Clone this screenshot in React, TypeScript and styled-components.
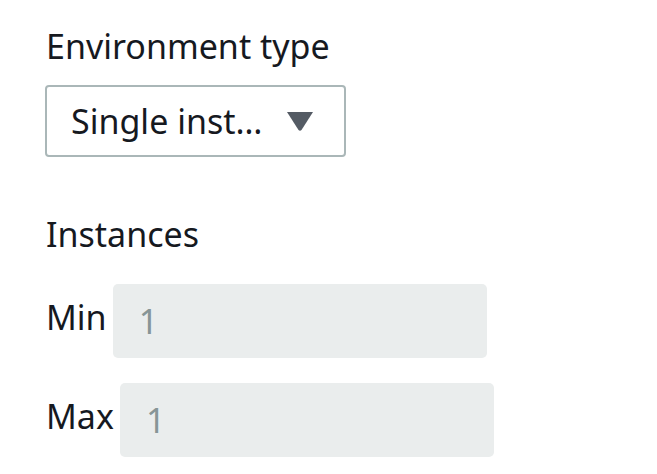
import React from "react";
import styled, { createGlobalStyle } from "styled-components";

const GlobalStyle = createGlobalStyle`
  body {
    margin: 0;
    background: #fff;
    font-family: "Noto Sans", "Open Sans", sans-serif;
    color: #16191f;
  }
`;

const Page = styled.div`
  display: flex;
  flex-direction: column;
  align-items: flex-start;
  padding: 23px 46px 0;
`;

const FieldLabel = styled.div<{ $gap: number }>`
  font-size: 34px;
  line-height: 46px;
  margin-bottom: ${(p) => p.$gap}px;
`;

const Select = styled.div`
  box-sizing: border-box;
  width: 301px;
  height: 72px;
  margin-left: -1px;
  display: flex;
  align-items: center;
  gap: 25px;
  padding: 0 24px;
  border: 2px solid #aab7b8;
  border-radius: 4px;
  font-size: 34px;
  line-height: 46px;
  white-space: nowrap;
  margin-bottom: 54px;
`;

const Caret = styled.svg`
  width: 26px;
  height: 19px;
  flex-shrink: 0;
`;

const Rows = styled.div`
  display: flex;
  flex-direction: column;
  gap: 25px;
`;

const Row = styled.div`
  display: flex;
  align-items: center;
  gap: 6px;
`;

const RowLabel = styled.span`
  font-size: 34px;
  line-height: 46px;
  margin-bottom: 8px;
`;

const NumberBox = styled.input`
  box-sizing: border-box;
  width: 374px;
  height: 74px;
  border: none;
  border-radius: 5px;
  background: #eaeded;
  padding: 0 26px;
  font-family: inherit;
  font-size: 34px;
  color: #879596;
  outline: none;
`;

const App: React.FC = () => {
  return (
    <>
      <GlobalStyle />
      <Page>
        <FieldLabel $gap={16}>Environment type</FieldLabel>
        <Select>
          <span>Single inst…</span>
          <Caret viewBox="0 0 26 19">
            <path d="M0 0 H26 L14.5 18 Q13 19.5 11.5 18 Z" fill="#545b64" />
          </Caret>
        </Select>
        <FieldLabel $gap={27}>Instances</FieldLabel>
        <Rows>
          <Row>
            <RowLabel>Min</RowLabel>
            <NumberBox value="1" readOnly disabled />
          </Row>
          <Row>
            <RowLabel>Max</RowLabel>
            <NumberBox value="1" readOnly disabled />
          </Row>
        </Rows>
      </Page>
    </>
  );
};

export default App;
